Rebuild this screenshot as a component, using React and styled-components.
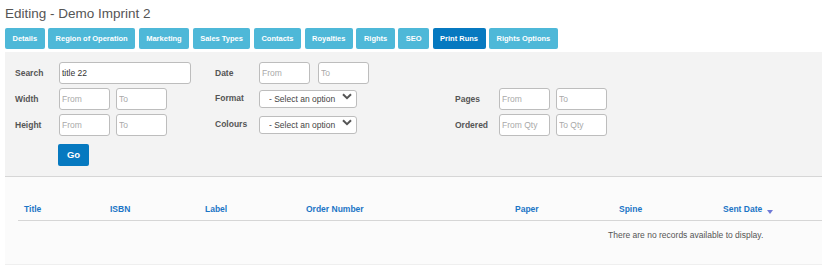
import React, { useState } from "react";
import styled, { createGlobalStyle } from "styled-components";

const GlobalStyle = createGlobalStyle`
  body {
    margin: 0;
    background: #fff;
    font-family: "Liberation Sans", Arial, sans-serif;
  }
`;

const Page = styled.div`
  padding: 5px 0 0 5px;
  width: 817px;
  overflow: hidden;
`;

const Title = styled.h1`
  margin: 0 0 5px 0;
  font-size: 13.5px;
  line-height: 18px;
  font-weight: normal;
  color: #555;
`;

const Tabs = styled.div`
  display: flex;
  gap: 3.5px;
  margin-bottom: 3px;
`;

const Tab = styled.button`
  height: 21px;
  padding: 0 7.5px;
  border: none;
  border-radius: 2px;
  background: ${(props) => (props.active ? "#0679c0" : "#4eb8d8")};
  color: #fff;
  font-family: "Liberation Sans", Arial, sans-serif;
  font-size: 7.5px;
  font-weight: bold;
  cursor: pointer;
`;

const FilterPanel = styled.div`
  background: #f3f3f3;
  border-bottom: 1px solid #d6d6d6;
  padding: 10px 0 7px 10px;
  height: 107px;
`;

const FilterGrid = styled.div`
  display: grid;
  grid-template-columns: 44px 156px 44px 196px 44px 1fr;
  grid-auto-rows: 22px;
  row-gap: 4px;
  align-items: center;
`;

const Label = styled.label`
  font-size: 8.5px;
  font-weight: bold;
  color: #555;
  align-self: ${(props) => (props.top ? "start" : "center")};
  margin-top: ${(props) => (props.top ? "5px" : "0")};
`;

const Pair = styled.div`
  display: flex;
  gap: ${(props) => props.gap || 6}px;
`;

const Input = styled.input`
  box-sizing: border-box;
  width: ${(props) => props.w || 51}px;
  height: 22px;
  padding: 0 2px;
  border: 1px solid #bdbdbd;
  border-radius: 3px;
  background: #fff;
  font-family: "Liberation Sans", Arial, sans-serif;
  font-size: 8.5px;
  color: #333;
  outline: none;

  &::placeholder {
    color: #a9a9a9;
  }
`;

const SelectWrap = styled.div`
  position: relative;
  width: 98px;
  height: 18px;
  align-self: start;
`;

const Select = styled.select`
  box-sizing: border-box;
  appearance: none;
  width: 98px;
  height: 18px;
  padding: 0 0 0 9px;
  border: 1px solid #bdbdbd;
  border-radius: 3px;
  background: #fff;
  font-family: "Liberation Sans", Arial, sans-serif;
  font-size: 8.5px;
  color: #444;
  outline: none;
`;

const Chevron = styled.svg`
  position: absolute;
  right: 5px;
  top: 5px;
  pointer-events: none;
`;

const GoButton = styled.button`
  grid-column: 2;
  justify-self: start;
  margin-left: -1px;
  margin-top: 7px;
  width: 31px;
  height: 22px;
  border: none;
  border-radius: 2px;
  background: #0679c0;
  color: #fff;
  font-family: "Liberation Sans", Arial, sans-serif;
  font-size: 9.5px;
  font-weight: bold;
  cursor: pointer;
`;

const TableArea = styled.div`
  background: #fbfbfb;
  border-bottom: 1px solid #efefef;
  padding: 22px 0 0 13px;
  height: 65px;
`;

const Table = styled.table`
  border-collapse: collapse;
  width: 804px;
  table-layout: fixed;
`;

const Th = styled.th`
  text-align: left;
  padding: 5px 6px 6px;
  font-size: 8.5px;
  font-weight: bold;
  color: #1b75c6;
  border-bottom: 1px solid #d6d6d6;
  white-space: nowrap;
`;

const SortArrow = styled.span`
  display: inline-block;
  margin-left: 5px;
  width: 0;
  height: 0;
  border-left: 3px solid transparent;
  border-right: 3px solid transparent;
  border-top: 4px solid #6f79d6;
  vertical-align: -2px;
`;

const EmptyCell = styled.td`
  padding: 9px 0 0 590px;
  font-size: 8.5px;
  color: #555;
  white-space: nowrap;
`;

const tabs = [
  "Details",
  "Region of Operation",
  "Marketing",
  "Sales Types",
  "Contacts",
  "Royalties",
  "Rights",
  "SEO",
  "Print Runs",
  "Rights Options",
];

const columns = [
  { label: "Title", width: 86 },
  { label: "ISBN", width: 95 },
  { label: "Label", width: 101 },
  { label: "Order Number", width: 209 },
  { label: "Paper", width: 104 },
  { label: "Spine", width: 104 },
  { label: "Sent Date", width: 105, sorted: true },
];

const ChevronIcon = () => (
  <Chevron width="10" height="7" viewBox="0 0 10 7">
    <path d="M1 1.2 L5 5.2 L9 1.2" fill="none" stroke="#555" strokeWidth="2" />
  </Chevron>
);

const App = () => {
  const [active, setActive] = useState("Print Runs");
  const [search, setSearch] = useState("title 22");

  return (
    <Page>
      <GlobalStyle />
      <Title>Editing - Demo Imprint 2</Title>
      <Tabs>
        {tabs.map((t) => (
          <Tab key={t} active={active === t} onClick={() => setActive(t)}>
            {t}
          </Tab>
        ))}
      </Tabs>

      <FilterPanel>
        <FilterGrid>
          <Label>Search</Label>
          <Input w={132} value={search} onChange={(e) => setSearch(e.target.value)} />
          <Label>Date</Label>
          <Pair gap={8}>
            <Input placeholder="From" />
            <Input placeholder="To" />
          </Pair>
          <span />
          <span />

          <Label>Width</Label>
          <Pair>
            <Input placeholder="From" />
            <Input placeholder="To" />
          </Pair>
          <Label top>Format</Label>
          <SelectWrap>
            <Select defaultValue="">
              <option value="">- Select an option</option>
            </Select>
            <ChevronIcon />
          </SelectWrap>
          <Label>Pages</Label>
          <Pair>
            <Input placeholder="From" />
            <Input placeholder="To" />
          </Pair>

          <Label>Height</Label>
          <Pair>
            <Input placeholder="From" />
            <Input placeholder="To" />
          </Pair>
          <Label top>Colours</Label>
          <SelectWrap>
            <Select defaultValue="">
              <option value="">- Select an option</option>
            </Select>
            <ChevronIcon />
          </SelectWrap>
          <Label>Ordered</Label>
          <Pair>
            <Input placeholder="From Qty" />
            <Input placeholder="To Qty" />
          </Pair>

          <GoButton>Go</GoButton>
        </FilterGrid>
      </FilterPanel>

      <TableArea>
        <Table>
          <colgroup>
            {columns.map((c) => (
              <col key={c.label} style={{ width: c.width }} />
            ))}
          </colgroup>
          <thead>
            <tr>
              {columns.map((c) => (
                <Th key={c.label}>
                  {c.label}
                  {c.sorted && <SortArrow />}
                </Th>
              ))}
            </tr>
          </thead>
          <tbody>
            <tr>
              <EmptyCell colSpan={7}>There are no records available to display.</EmptyCell>
            </tr>
          </tbody>
        </Table>
      </TableArea>
    </Page>
  );
};

export default App;
